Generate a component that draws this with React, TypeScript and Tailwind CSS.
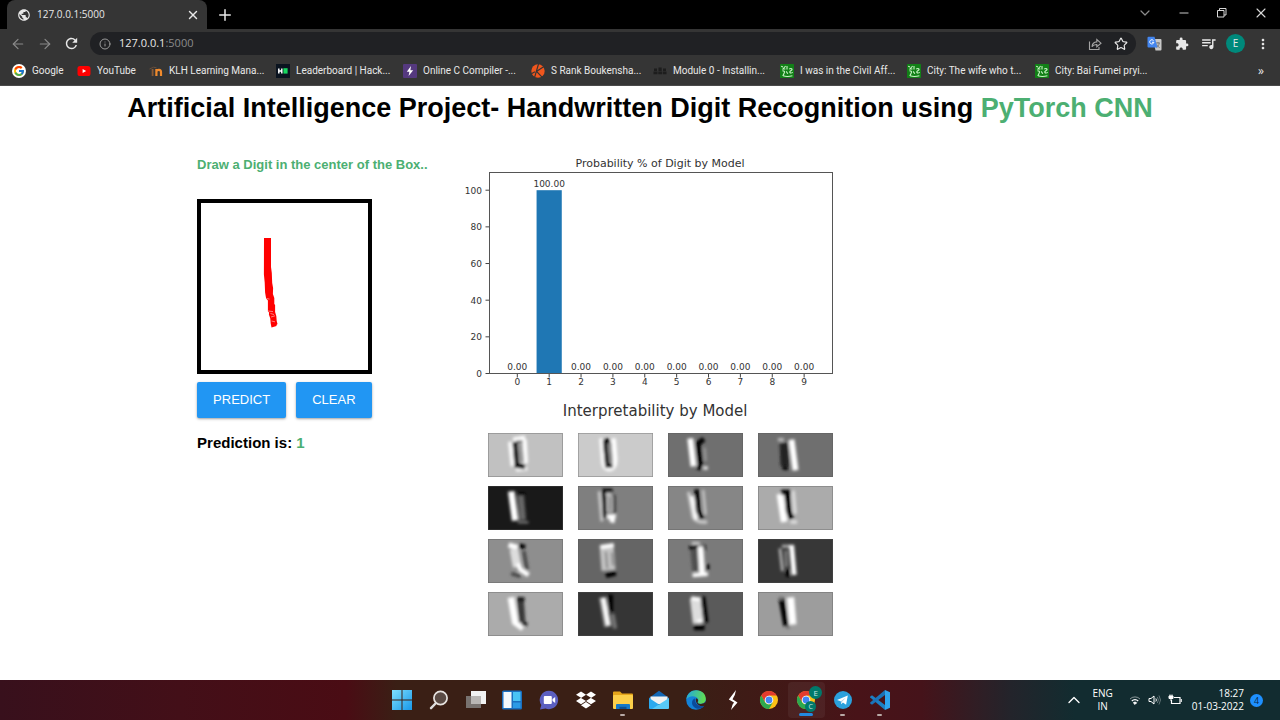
import type { ReactNode } from "react";
import { ArrowLeft, ArrowRight, ChevronDown, ChevronUp, Info, Minus, Plus, Star, X } from "lucide-react";
import { FcGoogle } from "react-icons/fc";
import { FaDropbox } from "react-icons/fa";
import { MdExtension, MdMoreVert, MdPublic, MdQueueMusic, MdRefresh } from "react-icons/md";

/* ---------- Browser chrome ---------- */

function GreenFavicon() {
  return (
    <svg viewBox="0 0 14 14" className="size-3.5">
      <rect width="14" height="14" rx="0.5" fill="#128017" />
      <path
        d="M1.200 2.200l1.800.8 M5.600 2L3 5h2.400 M7 2v3.600 M2.400 6.800c2 0 2.600.8 1.800 2.200L2.800 12 M3 11.800c3 1 6.400.8 9.400 0 M6.200 7.400l1.600 2.400 M9.200 5c2-1 3.600-.2 2.600 1-1.200 1-2.400 1.200-2 2.400.6.8 2 .6 3 0"
        fill="none"
        stroke="#c9f3c5"
        strokeWidth="1.1"
      />
    </svg>
  );
}

const bookmarks: { label: string; width: string; icon: ReactNode }[] = [
  {
    label: "Google",
    width: "w-[65px]",
    icon: (
      <span className="flex size-3.5 items-center justify-center rounded-full bg-white">
        <FcGoogle className="size-3" />
      </span>
    ),
  },
  {
    label: "YouTube",
    width: "w-[72px]",
    icon: (
      <svg viewBox="0 0 14 14" className="size-3.5">
        <rect x="0.5" y="2" width="13" height="10" rx="2.6" fill="#f00" />
        <path d="M5.6 4.9L9.2 7 5.6 9.1z" fill="#fff" />
      </svg>
    ),
  },
  {
    label: "KLH Learning Mana...",
    width: "w-[127px]",
    icon: (
      <svg viewBox="0 0 14 14" className="size-3.5" fill="none">
        <path d="M3.600 5v7" stroke="#8a5a35" strokeWidth="1.8" />
        <path d="M7.4 12V5 M7.4 7.2c1-2 4.6-2 4.6.8v4" stroke="#f08a2c" strokeWidth="2.2" />
        <path d="M0.500 5l4-1.800 3 .600" stroke="#6b4f3a" />
      </svg>
    ),
  },
  {
    label: "Leaderboard | Hack...",
    width: "w-[127px]",
    icon: (
      <svg viewBox="0 0 14 14" className="size-3.5">
        <rect width="14" height="14" fill="#0b1420" />
        <path d="M2.8 4.6v4.8 M5.8 4.6v4.8 M2.8 7h3" stroke="#fff" strokeWidth="1.5" />
        <rect x="7.4" y="4.2" width="4.2" height="5.4" fill="#18d860" />
      </svg>
    ),
  },
  {
    label: "Online C Compiler -...",
    width: "w-[128px]",
    icon: (
      <svg viewBox="0 0 14 14" className="size-3.5">
        <rect width="14" height="14" rx="1" fill="#55397f" />
        <path d="M8 2L3.8 7.8h2.6L5.6 12l4.6-5.8H7.4z" fill="#fff" />
      </svg>
    ),
  },
  {
    label: "S Rank Boukensha...",
    width: "w-[122px]",
    icon: (
      <svg viewBox="0 0 14 14" className="size-3.5">
        <circle cx="7" cy="7" r="6.7" fill="#f0561d" />
        <path d="M7.500 0L3.600 13.400 M5.400 7.400L13 2.400 M5.600 7.400L11 13.200 M0 10l4-2.200" stroke="#353535" strokeWidth="1.2" fill="none" />
      </svg>
    ),
  },
  {
    label: "Module 0 - Installin...",
    width: "w-[127px]",
    icon: (
      <svg viewBox="0 0 14 14" className="size-3.5" fill="#1d1d1d">
        <path d="M1 4.500h3v2.400H1zM5.500 3.600h3.200v3.300H5.500zM10 4.500h3v2.400h-3zM0.500 7.600h4v2.600h-4zM5.300 7.600h4v2.600h-4zM10 7.600h3.500v2.600H10z" />
      </svg>
    ),
  },
  { label: "I was in the Civil Aff...", width: "w-[127px]", icon: <GreenFavicon /> },
  { label: "City: The wife who t...", width: "w-[128px]", icon: <GreenFavicon /> },
  { label: "City: Bai Fumei pryi...", width: "w-[127px]", icon: <GreenFavicon /> },
];

const toolButton = "flex w-[27px] items-center justify-center";

function BrowserChrome() {
  return (
    <header className="bg-[#353535] font-['Open_Sans','Noto_Sans',sans-serif] text-[#e8e8e8]">
      <div className="flex h-[29px] items-stretch bg-black pl-[7px]">
        <div className="flex w-[200px] items-center rounded-t-lg bg-[#353535] pr-[7px] pl-2.5">
          <MdPublic className="size-3.5" />
          <span className="ml-1.5 flex-1 text-[10px]">127.0.0.1:5000</span>
          <button type="button" aria-label="Close tab">
            <X className="size-3.5" strokeWidth={2.4} />
          </button>
        </div>
        <button type="button" aria-label="New tab" className="ml-[9px]">
          <Plus className="size-[18px]" strokeWidth={2} />
        </button>
        <div className="flex flex-1 items-center justify-end gap-6 pr-[11px] pb-1 text-[#d8d8d8]">
          <button type="button" aria-label="Search tabs">
            <ChevronDown className="size-4 text-[#8c8c8c]" strokeWidth={1.8} />
          </button>
          <button type="button" aria-label="Minimize">
            <Minus className="size-3.5" strokeWidth={1.6} />
          </button>
          <button type="button" aria-label="Restore">
            <svg viewBox="0 0 14 14" className="size-3.5" fill="none" stroke="currentColor">
              <path d="M2.500 4.500h6.500V11H2.500z M4.500 4.500V2.500h6.500V9H9" />
            </svg>
          </button>
          <button type="button" aria-label="Close">
            <X className="size-4" strokeWidth={1.6} />
          </button>
        </div>
      </div>

      <div className="flex h-[29px] items-center px-1">
        <button type="button" aria-label="Back" className={toolButton}>
          <ArrowLeft className="size-4 text-[#8a8a8a]" strokeWidth={1.8} />
        </button>
        <button type="button" aria-label="Forward" className={toolButton}>
          <ArrowRight className="size-4 text-[#8a8a8a]" strokeWidth={1.8} />
        </button>
        <button type="button" aria-label="Reload" className={toolButton}>
          <MdRefresh className="size-[17px]" />
        </button>
        <div className="mx-[5px] flex h-[23px] flex-1 items-center rounded-full bg-[#202124] pr-2 pl-[9px]">
          <Info className="size-3 text-[#9a9a9a]" />
          <span className="ml-2 flex-1 text-[11px]">
            127.0.0.1<span className="text-[#8b8b8b]">:5000</span>
          </span>
          <button type="button" aria-label="Share">
            <svg viewBox="0 0 14 14" className="size-3.5" fill="none" stroke="#a5a5a5" strokeWidth="1.100">
              <path d="M1.500 4.500v8h9.500V10" />
              <path d="M4 9.800c.3-3.200 2-4.800 4.800-4.900V2.500L13 6.200 8.800 9.800V7.500C6.700 7.400 5.200 8 4 9.800z" />
            </svg>
          </button>
          <button type="button" aria-label="Bookmark this page" className="ml-3">
            <Star className="size-3.5" />
          </button>
        </div>
        <button type="button" aria-label="Translate" className={toolButton}>
          <svg viewBox="0 0 15 15" className="size-[15px]">
            <path d="M6 3h7.500a1 1 0 011 1v9.500a1 1 0 01-1 1H8.500z" fill="#c9c9c9" />
            <path d="M9 7h4 M11 6v1 M9.600 11.500c1.600-1.200 2.400-2.600 2.600-4.400 M9.800 8.400c.8 1.600 1.600 2.600 2.800 3.200" stroke="#777" fill="none" />
            <path d="M1.500 0.800h6L10.500 11.500H1.500a1 1 0 01-1-1V1.800a1 1 0 011-1z" fill="#4385ee" />
            <path d="M6.600 4.700A2.100 2.100 0 106.900 6.300H5" stroke="#fff" fill="none" />
          </svg>
        </button>
        <button type="button" aria-label="Extensions" className={toolButton}>
          <MdExtension className="size-3.5" />
        </button>
        <button type="button" aria-label="Media controls" className={toolButton}>
          <MdQueueMusic className="size-[17px]" />
        </button>
        <button type="button" aria-label="Profile" className={toolButton}>
          <span className="flex size-[19px] items-center justify-center rounded-full bg-[#00897b] text-[10px]">E</span>
        </button>
        <button type="button" aria-label="Menu" className={toolButton}>
          <MdMoreVert className="size-4" />
        </button>
      </div>

      <nav aria-label="Bookmarks" className="flex h-7 items-center border-b border-[#4a4a4a] pr-4 pb-0.5 pl-3">
        {bookmarks.map((b) => (
          <a key={b.label} href="#" className={`flex shrink-0 items-center gap-1.5 font-[Roboto,sans-serif] text-[10px] whitespace-nowrap ${b.width}`}>
            {b.icon}
            {b.label}
          </a>
        ))}
        <button type="button" aria-label="More bookmarks" className="ml-auto text-xs">
          »
        </button>
      </nav>
    </header>
  );
}

/* ---------- Probability chart ---------- */

const probabilities = [0, 100, 0, 0, 0, 0, 0, 0, 0, 0];
const xOf = (digit: number) => 57.3 + digit * 31.87;
const yOf = (value: number) => 218.5 - value * 1.833;

function ProbabilityChart() {
  return (
    <svg
      viewBox="0 0 376 235"
      className="block w-full font-['DejaVu_Sans',sans-serif] text-[9px]"
      role="img"
      aria-label="Probability % of Digit by Model"
      fill="#333"
    >
      <text x="200" y="12" textAnchor="middle" className="text-[11px]">
        Probability % of Digit by Model
      </text>
      {probabilities.map((p, digit) => (
        <g key={digit} textAnchor="middle">
          <rect x={xOf(digit) - 12.6} y={yOf(p)} width="25.2" height={218.5 - yOf(p)} fill="#1f77b4" />
          <path d={`M${xOf(digit)} 219v3.500`} stroke="#444" />
          <text x={xOf(digit)} y={yOf(p) - 3.5}>
            {p.toFixed(2)}
          </text>
          <text x={xOf(digit)} y="230">
            {digit}
          </text>
        </g>
      ))}
      {[0, 20, 40, 60, 80, 100].map((v) => (
        <g key={v} textAnchor="end">
          <path d={`M25.500 ${yOf(v)}h3.500`} stroke="#444" />
          <text x="22" y={yOf(v) + 3.5}>
            {v}
          </text>
        </g>
      ))}
      <rect x="29.500" y="17.500" width="343" height="201" fill="none" stroke="#555" />
    </svg>
  );
}

/* ---------- Convolution feature maps ---------- */

type Mark = [color: string, width: number, d: string];
type FeatureMap = { bg: string; marks: Mark[] };

const featureMaps: FeatureMap[] = [
  {
    bg: "#c1c1c1",
    marks: [
      ["#fff", 13, "M67 26L75 100 M76 20L112 14 M110 20L114 92 M84 109L118 106"],
      ["#999", 16, "M96 32L101 88"],
      ["#000", 15, "M81 27L87 98L112 102"],
      ["#333", 6, "M84 26H104"],
    ],
  },
  {
    bg: "#cbcbcb",
    marks: [
      ["#fff", 14, "M71 16L77 90Q80 108 96 108Q113 104 112 78L107 16"],
      ["#888", 14, "M94 30L98 90"],
      ["#000", 13, "M76 24H96 M81 24L88 98H104"],
    ],
  },
  {
    bg: "#6f6f6f",
    marks: [
      ["#999", 8, "M110 44L113 84"],
      ["#fff", 18, "M67 16L77 100"],
      ["#000", 15, "M108 18L91 32L98 92L92 110"],
      ["#ddd", 11, "M106 105H120"],
    ],
  },
  {
    bg: "#6f6f6f",
    marks: [
      ["#bbb", 10, "M60 20H78"],
      ["#222", 26, "M78 30L81 100"],
      ["#000", 11, "M74 104L90 106"],
      ["#fff", 18, "M101 20L113 112"],
    ],
  },
  {
    bg: "#191919",
    marks: [
      ["#666", 20, "M98 26L105 102"],
      ["#000", 9, "M92 24H112"],
      ["#fff", 20, "M70 16L82 104"],
      ["#888", 6, "M90 109H122"],
    ],
  },
  {
    bg: "#7f7f7f",
    marks: [
      ["#ccc", 9, "M64 16L72 106 M84 24H100"],
      ["#000", 12, "M72 14H104 M78 20L81 96"],
      ["#333", 8, "M109 26L110 86"],
      ["#ccc", 16, "M96 30L96 78"],
      ["#444", 5, "M97 32L96 76"],
      ["#fff", 15, "M88 92H106L102 110"],
    ],
  },
  {
    bg: "#868686",
    marks: [
      ["#ccc", 10, "M62 18L76 92Q82 110 118 108"],
      ["#fff", 11, "M72 30L85 100"],
      ["#ccc", 7, "M106 12L113 86"],
      ["#000", 14, "M86 10L91 76L104 98"],
    ],
  },
  {
    bg: "#ababab",
    marks: [
      ["#ddd", 10, "M106 14L112 84 M98 108H118"],
      ["#fff", 20, "M66 24L79 108"],
      ["#000", 16, "M70 19H98 M88 22L92 76L102 98"],
    ],
  },
  {
    bg: "#8e8e8e",
    marks: [
      ["#444", 10, "M108 36L118 92 M70 104L98 112"],
      ["#fff", 16, "M62 18L90 26"],
      ["#ddd", 26, "M78 30L88 84"],
      ["#fff", 14, "M90 74L98 92L122 108"],
      ["#000", 14, "M92 20L112 24"],
    ],
  },
  {
    bg: "#656565",
    marks: [
      ["#c4c4c4", 42, "M86 18L92 94"],
      ["#fff", 12, "M68 24L108 18"],
      ["#888", 7, "M84 38L88 88 M102 40L106 80"],
      ["#000", 16, "M84 109L114 102"],
    ],
  },
  {
    bg: "#7a7a7a",
    marks: [
      ["#505050", 22, "M78 30L84 96"],
      ["#000", 13, "M64 27L92 20 M107 18V36 M118 76V92"],
      ["#ccc", 9, "M72 13H96"],
      ["#fff", 17, "M98 22L103 104"],
      ["#fff", 12, "M74 109L120 105"],
    ],
  },
  {
    bg: "#373737",
    marks: [
      ["#aaa", 9, "M66 28L74 96 M72 22H98"],
      ["#888", 8, "M84 34L86 84"],
      ["#fff", 15, "M101 18L109 108"],
      ["#000", 12, "M90 92V114"],
    ],
  },
  {
    bg: "#ababab",
    marks: [
      ["#fff", 20, "M69 16L82 90L106 108"],
      ["#383838", 20, "M98 24L103 92"],
      ["#111", 12, "M88 22H110 M102 94L118 98"],
    ],
  },
  {
    bg: "#353535",
    marks: [
      ["#777", 12, "M104 66L112 110"],
      ["#000", 15, "M98 8V60"],
      ["#999", 22, "M74 16L90 104"],
      ["#fff", 12, "M76 18L91 100"],
    ],
  },
  {
    bg: "#5a5a5a",
    marks: [
      ["#000", 16, "M104 14L114 92 M78 107H110"],
      ["#ddd", 32, "M82 18L91 94"],
      ["#fff", 11, "M70 18L96 22 M88 88H102"],
    ],
  },
  {
    bg: "#9d9d9d",
    marks: [
      ["#000", 17, "M70 18L85 102"],
      ["#777", 10, "M66 14L72 24 M84 106H96"],
      ["#fff", 22, "M98 16L105 98"],
    ],
  },
];

function FeatureMaps() {
  return (
    <div className="grid grid-cols-4 gap-x-[15px] gap-y-[9px]">
      {featureMaps.map((map, i) => (
        <svg key={i} viewBox="0 0 226 132" preserveAspectRatio="none" className="h-11 w-full" role="img" aria-label={`Feature map ${i + 1}`}>
          <filter id={`soft-${i}`} x="-50%" y="-50%" width="200%" height="200%">
            <feGaussianBlur stdDeviation="4.500 4.500" />
          </filter>
          <rect width="226" height="132" fill={map.bg} />
          <g filter={`url(#soft-${i})`} fill="none">
            {map.marks.map(([color, width, d]) => (
              <path key={d} d={d} stroke={color} strokeWidth={width} />
            ))}
          </g>
          <rect x="1" y="1" width="224" height="130" fill="none" stroke="#555" strokeOpacity="0.500" strokeWidth="2" />
        </svg>
      ))}
    </div>
  );
}

/* ---------- Page ---------- */

function DigitPage() {
  return (
    <main className="flex-1 bg-white font-['Liberation_Sans',Arial,sans-serif] text-black">
      <h1 className="text-center text-[27px] leading-[44px] font-bold">
        Artificial Intelligence Project- Handwritten Digit Recognition using <span className="text-[#4caf72]">PyTorch CNN</span>
      </h1>
      <div className="mt-[25px] flex gap-6 pl-[15.4%]">
        <section className="w-[239px] shrink-0">
          <h2 className="text-[13px] leading-5 font-bold whitespace-nowrap text-[#4caf72]">Draw a Digit in the center of the Box..</h2>
          <div className="mt-6 size-[175px] border-4 border-black">
            <svg viewBox="0 0 167 167" className="size-full" role="img" aria-label="Drawing area">
              <path
                d="M63 35h7v29l.8 6 .4 10 .9 5-.2 6 1.400 4v6l.8 1v7l1.200 4 .4 5 .8 3-1 1v1l-5 1.500-.8-4-.4-5-1.400-4 .2-2-1.200-1v-11l-1.800-2-1-6-.4-10-.8-8z"
                fill="#f00"
              />
              <path d="M67 108l5 .6 M69.500 110.500l3.500 1 M70 114l4-1.200 M70.500 118l3.500 .8 M65.500 95.500l3 .6" stroke="#ff9a9a" strokeWidth="0.8" fill="none" />
            </svg>
          </div>
          <div className="mt-2 flex gap-2.5 text-[13px]">
            <button type="button" className="h-9 rounded-xs bg-[#2196f3] px-4 text-white shadow-sm shadow-black/30">
              PREDICT
            </button>
            <button type="button" className="h-9 rounded-xs bg-[#2196f3] px-4 text-white shadow-sm shadow-black/30">
              CLEAR
            </button>
          </div>
          <p className="mt-[15px] text-[15px] leading-5 font-bold">
            Prediction is: <span className="text-[#4caf72]">1</span>
          </p>
        </section>
        <section className="w-[376px]">
          <ProbabilityChart />
          <h2 className="mt-[11px] pl-3.5 text-center font-['DejaVu_Sans',sans-serif] text-[15px] leading-5 text-[#333]">Interpretability by Model</h2>
          <div className="mt-3 pr-[3px] pl-7">
            <FeatureMaps />
          </div>
        </section>
      </div>
    </main>
  );
}

/* ---------- Taskbar ---------- */

function ChromeLogo() {
  return (
    <svg viewBox="0 0 20 20" className="size-5">
      <circle cx="10" cy="10" r="9" fill="#fbc116" />
      <path d="M2.200 5.500A9 9 0 0117.800 5.500H10L6.100 12.250z" fill="#e33b2e" />
      <path d="M2.200 5.500L6.100 12.250Q7.500 14.500 10 14.500L13.900 12.250 10 19A9 9 0 012.200 5.500z" fill="#2da94f" />
      <circle cx="10" cy="10" r="4.300" fill="#fff" />
      <circle cx="10" cy="10" r="3.400" fill="#4285f4" />
    </svg>
  );
}

type App = { name: string; icon: ReactNode; state?: "open" | "active" };

const apps: App[] = [
  {
    name: "Start",
    icon: (
      <svg viewBox="0 0 20 20" className="size-5">
        <linearGradient id="start" x2="1" y2="1">
          <stop stopColor="#7fe0ff" />
          <stop offset="1" stopColor="#1797e8" />
        </linearGradient>
        <path d="M0 0h9.500v9.500H0zM10.500 0H20v9.500h-9.500zM0 10.500h9.500V20H0zM10.500 10.500H20V20h-9.500z" fill="url(#start)" />
      </svg>
    ),
  },
  {
    name: "Search",
    icon: (
      <svg viewBox="0 0 20 20" className="size-5">
        <path d="M7 13L2 18.200" stroke="#ddd" strokeWidth="2.400" strokeLinecap="round" />
        <circle cx="11.500" cy="8" r="6.600" fill="#5a4a44" stroke="#e6e2df" strokeWidth="1.700" />
      </svg>
    ),
  },
  {
    name: "Task view",
    icon: (
      <svg viewBox="0 0 20 20" className="size-5">
        <rect x="5" y="1" width="15" height="13" fill="#f2f2f2" />
        <rect x="0" y="6" width="15" height="12" fill="#7f7b79" fillOpacity="0.9" />
        <rect x="5" y="6" width="10" height="8" fill="#b9b6b4" />
      </svg>
    ),
  },
  {
    name: "Widgets",
    icon: (
      <svg viewBox="0 0 20 20" className="size-5">
        <rect width="20" height="19" y="0.500" rx="1.500" fill="#1a6fc0" />
        <rect x="1.500" y="2" width="8" height="16" fill="#f4f8fb" />
        <rect x="11" y="2" width="7.500" height="9" fill="#49c3f5" />
        <rect x="11" y="12.500" width="7.500" height="5.500" fill="#2b9ae6" />
      </svg>
    ),
  },
  {
    name: "Chat",
    icon: (
      <svg viewBox="0 0 20 20" className="size-5">
        <path d="M10 .800a9.200 9.200 0 11-3.600 17.700L1 19.600l1.300-4.500A9.200 9.200 0 0110 .800z" fill="#5b5fc0" />
        <rect x="4.800" y="6" width="8" height="8" rx="1" fill="#fff" />
        <path d="M13.500 9l2.700-2v6l-2.700-2z" fill="#fff" />
      </svg>
    ),
  },
  { name: "Dropbox", icon: <FaDropbox className="size-5 text-white" /> },
  {
    name: "File Explorer",
    state: "open",
    icon: (
      <svg viewBox="0 0 20 20" className="size-5">
        <path d="M0 2.500a1 1 0 011-1h6l2 2h10a1 1 0 011 1V8H0z" fill="#e5a51b" />
        <rect y="5" width="20" height="14" rx="1" fill="#fccf4a" />
        <path d="M4 14h12a1 1 0 011 1v4H3v-4a1 1 0 011-1z" fill="#1578c8" />
        <rect x="6.500" y="16.800" width="7" height="2.200" fill="#0b4f92" />
      </svg>
    ),
  },
  {
    name: "Mail",
    icon: (
      <svg viewBox="0 0 20 20" className="size-5">
        <path d="M0 8L10 .800 20 8v4H0z" fill="#1266b4" />
        <path d="M1.500 6.500h17V14h-17z" fill="#f1f1f1" />
        <path d="M0 8l10 6.500V19H1a1 1 0 01-1-1z" fill="#2ba9ee" />
        <path d="M20 8L3 19h16a1 1 0 001-1z" fill="#58c9f8" />
      </svg>
    ),
  },
  {
    name: "Edge",
    icon: (
      <svg viewBox="0 0 20 20" className="size-5">
        <linearGradient id="edge-top" x2="1" y2="0.200">
          <stop stopColor="#1fa6e4" />
          <stop offset="1" stopColor="#5fdc55" />
        </linearGradient>
        <circle cx="10" cy="10" r="9.800" fill="#1382d8" />
        <path d="M.300 9.200C1.200 3.600 5.200.200 10.300.200c5.700 0 9.500 4 9.500 8.600 0 3.200-2.200 5-5.200 5-2 0-3-.8-2.600-1.800.5-1 .6-1.500.2-2.700C10.600 5.500 3.800 4.800.300 9.200z" fill="url(#edge-top)" />
        <path d="M8.800 8.200c-4 1.800-3.800 8.300 1.600 10.300 3.200 1 6.600-.3 8-2.700-2 .8-4.700.8-6.500-.7-2.500-2-3-4-3.100-6.900z" fill="#0b4b9b" />
        <path d="M10 8.200c2 .3 2.500 2 1.800 3.200-.7 1.500.4 2.600 3.200 2.500 2-.1 3.700-.9 4.500-2.300l.400 3-1.200 1.200c-3 1-6.800.2-8.200-3-.8-1.900-1-3.500-.5-4.600z" fill="#3a1f17" />
      </svg>
    ),
  },
  {
    name: "Stremio",
    icon: (
      <svg viewBox="0 0 20 20" className="size-5">
        <path d="M13 0l-1.200 5-2.300 4.300 5 3.200L8 20l1.500-5.200L11 12.500 5.800 9.500z" fill="#fff" />
      </svg>
    ),
  },
  { name: "Chrome", icon: <ChromeLogo /> },
  {
    name: "Chrome, profile E",
    state: "active",
    icon: (
      <span className="relative flex">
        <ChromeLogo />
        <span className="absolute -top-1 -right-1.5 flex size-[13px] items-center justify-center rounded-full bg-[#00796b] text-[8px] leading-none text-[#c8e6e0]">E</span>
        <span className="absolute right-0 -bottom-0.5 flex size-[11px] items-center justify-center rounded-full bg-[#00796b] text-[7px] leading-none text-[#c8e6e0]">C</span>
      </span>
    ),
  },
  {
    name: "Telegram",
    state: "open",
    icon: (
      <svg viewBox="0 0 20 20" className="size-5">
        <circle cx="10" cy="10" r="9" fill="#2ba0dc" />
        <path d="M4 9.900l10.800-4.500-1.700 9.400-3.200-2.300-1.700 1.700-.400-3z" fill="#fff" />
        <path d="M7.800 11.200l5.200-3.700-4.200 4.500-.600 2.200z" fill="#a9cfe6" />
      </svg>
    ),
  },
  {
    name: "Visual Studio Code",
    state: "open",
    icon: (
      <svg viewBox="0 0 20 20" className="size-5">
        <path d="M0 6.800L2 5.200 15 15v5L.200 7.600z" fill="#1b7fc4" />
        <path d="M0 13.200L2 14.800 15 5V0L.200 12.400z" fill="#1a73b8" />
        <path d="M15 0l5 2.300v15.400L15 20z" fill="#2fa4ee" />
      </svg>
    ),
  },
];

function Taskbar() {
  return (
    <footer className="grid h-10 grid-cols-[1fr_auto_1fr] bg-[linear-gradient(90deg,#38101c_0%,#430f18_14%,#4a0c14_27%,#3a1f15_31%,#3a1f15_54%,#481318_67%,#45131a_72%,#23242b_79%,#122c30_84%,#122c30_100%)] font-['Open_Sans','Noto_Sans',sans-serif] text-white">
      <div />
      <div className="ml-0.5 grid w-[514px] grid-cols-14">
        {apps.map((app) => (
          <button
            key={app.name}
            type="button"
            aria-label={app.name}
            className={`relative my-0.5 flex items-center justify-center rounded ${app.state === "active" ? "bg-white/5" : ""}`}
          >
            {app.icon}
            {app.state === "open" && <span className="absolute bottom-0.5 h-0.5 w-[5px] rounded-full bg-[#b8aaa6]" />}
            {app.state === "active" && <span className="absolute bottom-0.5 h-[3px] w-3.5 rounded-full bg-[#2389e0]" />}
          </button>
        ))}
      </div>
      <div className="flex items-center justify-end pr-[17px] text-[10px] leading-[13px]">
        <button type="button" aria-label="Show hidden icons">
          <ChevronUp className="size-5" strokeWidth={1.6} />
        </button>
        <span className="ml-2 text-center">
          ENG
          <br />
          IN
        </span>
        <span className="ml-4 flex gap-[7px]">
          <svg viewBox="0 0 12 12" className="size-3" fill="none" stroke="#fff">
            <path d="M1 5a7 7 0 0110 0" strokeOpacity="0.500" />
            <path d="M2.800 7a4.500 4.500 0 016.400 0" strokeWidth="1.200" />
            <path d="M4.400 8.800a2.300 2.300 0 013.200 0L6 10.400z" fill="#fff" />
          </svg>
          <svg viewBox="0 0 13 12" className="h-3 w-[13px]" fill="none" stroke="#fff">
            <path d="M1 4.500h2L6 2v8L3 7.500H1z" />
            <path d="M7.800 4.500q1.200 1.500 0 3" />
            <path d="M9.300 3q2.200 3 0 6 M11 1.500q3 4.500 0 9" strokeOpacity="0.350" />
          </svg>
          <svg viewBox="0 0 14 12" className="h-3 w-3.5" fill="none" stroke="#fff">
            <path d="M6 3.500h6v6H3.500V6" strokeWidth="1.200" />
            <path d="M1 2h4v2.500H1z" fill="#fff" />
            <path d="M2 .500V2 M4 .500V2 M3 4v3 M13.300 5v3" />
          </svg>
        </span>
        <span className="ml-2.5 text-right">
          18:27
          <br />
          01-03-2022
        </span>
        <span className="ml-1.5 flex size-[13px] items-center justify-center rounded-full bg-[#1e90ff] text-[9px] leading-none text-[#0b2a4a]">4</span>
      </div>
    </footer>
  );
}

export default function App() {
  return (
    <div className="flex min-h-screen flex-col">
      <BrowserChrome />
      <DigitPage />
      <Taskbar />
    </div>
  );
}
